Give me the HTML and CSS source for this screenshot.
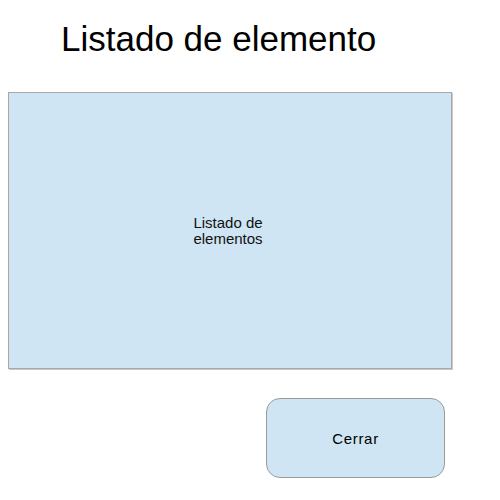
FILE: index.html
```html
<!DOCTYPE html>
<html>
<head>
<meta charset="utf-8">
<link rel="stylesheet" href="styles.css">
</head>
<body>
<div class="page">
  <h1 class="title">Listado de elemento</h1>
  <div class="list-box">
    <div class="list-label">Listado de<br>elementos</div>
  </div>
  <div class="actions">
    <button class="close-btn">Cerrar</button>
  </div>
</div>
</body>
</html>
```
FILE: styles.css
```css
html, body {
  margin: 0;
  padding: 0;
  background: #ffffff;
}
.page {
  width: 500px;
  height: 500px;
  font-family: "Liberation Sans", Arial, sans-serif;
  color: #000;
  display: flex;
  flex-direction: column;
}
.title {
  margin: 0;
  padding: 19px 0 0 61px;
  height: 92px;
  box-sizing: border-box;
  font-size: 35px;
  font-weight: normal;
  line-height: 40px;
}
.list-box {
  margin-left: 8px;
  width: 444px;
  height: 277px;
  box-sizing: border-box;
  background: #cfe5f3;
  border: 1px solid #a8a8a8;
  box-shadow: 1px 1px 0 #c8c8c8;
  display: flex;
  align-items: center;
  justify-content: center;
}
.list-label {
  font-size: 15px;
  line-height: 16px;
  text-align: left;
  color: #111;
  padding-right: 4px;
}
.actions {
  display: flex;
  justify-content: flex-start;
  padding: 29px 0 0 266px;
}
.close-btn {
  width: 179px;
  height: 80px;
  box-sizing: border-box;
  background: #cfe5f3;
  border: 1px solid #9a9a9a;
  border-radius: 14px;
  font-family: "Liberation Sans", Arial, sans-serif;
  font-size: 15px;
  letter-spacing: 0.7px;
  color: #000;
  padding: 0;
}
```
